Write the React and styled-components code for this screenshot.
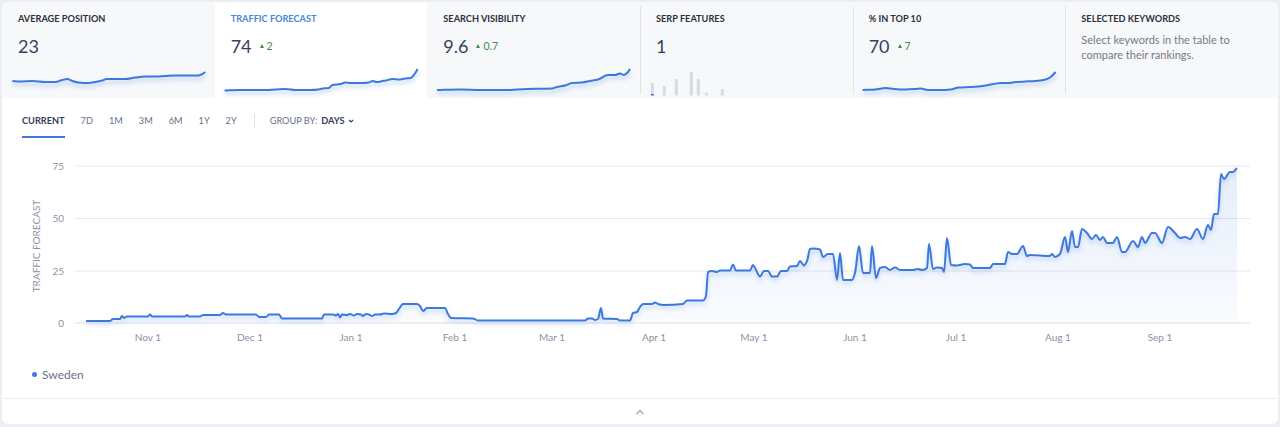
import React from "react";
import styled, { createGlobalStyle } from "styled-components";

const GlobalStyle = createGlobalStyle`
  html, body {
    margin: 0;
    padding: 0;
    background: #eceef3;
    font-family: "Lato", "Liberation Sans", sans-serif;
  }
`;

const BLUE = "#3d79db";

// chart points in page pixel coordinates
const CHART = [
  [86, 321], [110, 321], [113, 319], [120, 319], [122, 316], [124, 318], [127, 316.5], [148, 316.5],
  [150, 314.5], [152, 316.5], [185, 316.5], [187, 315], [189, 316.5], [200, 316.5], [203, 315], [220, 315],
  [223, 313], [226, 314.5], [256, 314.5], [259, 317], [266, 317], [269, 314.5], [279, 314.5], [282, 318.5],
  [322, 318.5], [324, 314.5], [333, 314.5], [336, 315.5], [338, 314], [340, 317.5], [342, 314.5], [347, 315],
  [350, 314], [354, 315.5], [357, 314], [361, 314.5], [363, 316], [366, 314], [369, 314.5], [372, 316],
  [375, 314.5], [380, 314.5], [384, 313.5], [392, 314], [396, 313], [399, 309], [403, 304], [417, 304],
  [420, 306], [423, 311], [427, 308], [445, 308], [448, 314], [451, 318], [473, 318.5], [478, 320.5],
  [585, 320.5], [588, 318.5], [592, 318.5], [595, 320], [598, 319], [601, 308], [603, 318.5], [617, 319],
  [620, 320.5], [630, 320.5], [633, 313], [637, 312], [640, 307], [643, 304], [652, 304], [655, 302.5],
  [658, 304], [663, 305], [683, 304], [687, 300.5], [703, 300.5], [706, 296], [708, 272], [712, 271],
  [717, 272], [720, 270.5], [730, 270.5], [733, 264.5], [736, 270.5], [750, 270.5], [753, 265], [756, 270],
  [760, 276.5], [764, 271], [768, 271], [772, 276.5], [777, 276.5], [781, 271], [787, 271], [790, 266.5],
  [797, 266], [800, 261], [804, 265.5], [807, 261], [810, 249], [813, 248.5], [820, 249.5], [823, 257],
  [828, 254], [833, 254], [837, 280], [840, 253], [843, 280], [852, 280], [855, 273], [859, 246],
  [863, 273], [870, 273], [872, 246], [876, 278], [880, 268], [885, 267], [890, 270], [895, 267.5],
  [900, 270], [913, 270], [918, 269], [922, 270], [927, 268], [929, 244], [933, 269], [937, 267.5],
  [942, 268], [944, 272], [947, 238], [951, 265], [957, 265.5], [965, 264], [970, 264.5], [973, 268],
  [990, 268], [993, 264], [1005, 264], [1008, 252], [1012, 254], [1017, 254], [1023, 246], [1027, 256],
  [1030, 255], [1050, 256], [1052, 254], [1055, 257], [1060, 254], [1065, 237], [1068, 252], [1072, 231],
  [1075, 247], [1078, 247], [1082, 229], [1087, 233], [1092, 239], [1096, 235], [1100, 240], [1103, 237],
  [1107, 243], [1113, 243], [1117, 237], [1122, 252], [1125, 252], [1133, 241], [1138, 247], [1142, 237],
  [1145, 243], [1152, 233], [1155, 233], [1162, 243], [1168, 227], [1175, 233], [1180, 238], [1185, 237],
  [1190, 239], [1197, 229], [1203, 239], [1208, 225], [1211, 230], [1214, 214], [1218, 214], [1221, 174],
  [1224, 179], [1230, 172], [1233, 172], [1237, 168],
];

const Y_TICKS = [
  { label: "75", y: 166 },
  { label: "50", y: 218.5 },
  { label: "25", y: 271 },
  { label: "0", y: 323 },
];

const X_TICKS = [
  ["Nov 1", 148], ["Dec 1", 250], ["Jan 1", 351], ["Feb 1", 455], ["Mar 1", 552],
  ["Apr 1", 654], ["May 1", 754], ["Jun 1", 855], ["Jul 1", 956], ["Aug 1", 1058], ["Sep 1", 1160],
];

const METRICS = [
  {
    title: "Average position",
    value: "23",
    left: 2,
    spark: [[12, 81], [20, 81.5], [32, 81], [45, 82], [55, 82], [62, 80], [67, 79], [72, 81], [78, 82.5],
      [88, 83], [95, 82], [102, 80.5], [106, 79], [125, 79], [135, 77.5], [145, 76.5], [155, 76.5],
      [165, 76], [175, 75.5], [185, 75.5], [198, 75.5], [202, 74], [205, 72]],
  },
  {
    title: "Traffic forecast",
    value: "74",
    delta: "2",
    active: true,
    left: 214.7,
    spark: [[224, 90.5], [240, 90], [260, 90], [275, 89.5], [285, 89], [295, 90], [310, 90], [318, 89.5],
      [322, 88.5], [328, 88], [332, 85], [340, 84], [345, 82.5], [350, 83], [355, 83], [362, 83],
      [368, 82.5], [372, 81], [376, 82], [382, 81], [385, 80.5], [392, 79], [398, 79.5], [402, 79],
      [405, 78.5], [410, 78], [414, 74], [417, 69]],
  },
  {
    title: "Search visibility",
    value: "9.6",
    delta: "0.7",
    left: 427.3,
    spark: [[437, 90], [460, 89.5], [480, 90], [505, 90], [527, 89], [552, 88.5], [557, 87], [565, 85.5],
      [572, 83], [582, 82.5], [590, 81], [598, 79.5], [608, 75], [615, 75], [620, 73.5], [624, 75],
      [628, 72], [630, 69]],
  },
  {
    title: "SERP features",
    value: "1",
    left: 640,
    bars: [[652, 83], [664, 86], [676, 79], [691, 72], [698, 79], [706, 92.5], [722, 89]],
  },
  {
    title: "% in top 10",
    value: "70",
    delta: "7",
    left: 852.7,
    spark: [[862, 90], [875, 89.5], [885, 88], [893, 89], [905, 89.5], [915, 89], [920, 88.5], [927, 90],
      [940, 90], [950, 89.5], [958, 87.5], [970, 87], [978, 86.5], [985, 85.5], [993, 84], [1000, 83],
      [1008, 83], [1015, 82], [1025, 81.5], [1035, 81], [1040, 80.5], [1045, 79.5], [1050, 77], [1055, 72]],
  },
  {
    title: "Selected keywords",
    text: "Select keywords in the table to compare their rankings.",
    left: 1065.3,
  },
];

const TABS = ["Current", "7D", "1M", "3M", "6M", "1Y", "2Y"];

// monotone-x cubic, same idea as d3.curveMonotoneX
function monotonePath(pts) {
  const n = pts.length;
  const dx = [];
  const m = [];
  for (let i = 0; i < n - 1; i++) {
    dx[i] = pts[i + 1][0] - pts[i][0];
    m[i] = (pts[i + 1][1] - pts[i][1]) / dx[i];
  }
  const t = [m[0]];
  for (let i = 1; i < n - 1; i++) {
    if (m[i - 1] * m[i] <= 0) {
      t[i] = 0;
    } else {
      const common = dx[i - 1] + dx[i];
      t[i] = (3 * common) / ((common + dx[i]) / m[i - 1] + (common + dx[i - 1]) / m[i]);
    }
  }
  t[n - 1] = m[n - 2];
  let d = `M${pts[0][0]},${pts[0][1]}`;
  for (let i = 0; i < n - 1; i++) {
    const [x0, y0] = pts[i];
    const [x1, y1] = pts[i + 1];
    const h = dx[i] / 3;
    d += `C${x0 + h},${y0 + t[i] * h},${x1 - h},${y1 - t[i + 1] * h},${x1},${y1}`;
  }
  return d;
}

const Page = styled.div`
  margin: 2px 2px 0;
  background: #fff;
  border-radius: 6px;
  overflow: hidden;
`;

const MetricsRow = styled.div`
  display: grid;
  grid-template-columns: repeat(6, 1fr);
  height: 96px;
`;

const Card = styled.div`
  position: relative;
  display: flex;
  flex-direction: column;
  padding: 10px 0 0 16px;
  background: ${(p) => (p.$active ? "#fff" : "#f7f8fa")};

  &::before {
    content: "";
    display: ${(p) => (p.$divider ? "block" : "none")};
    position: absolute;
    left: 0;
    top: 4px;
    bottom: 4px;
    width: 1px;
    background: #e2e4ea;
  }
`;

const CardTitle = styled.div`
  font-size: 9.2px;
  line-height: 13px;
  font-weight: 700;
  text-transform: uppercase;
  color: ${(p) => (p.$active ? "#4a86d8" : "#2c303b")};
`;

const ValueRow = styled.div`
  display: flex;
  align-items: center;
  gap: 8px;
  margin-top: 9px;
  height: 24px;
`;

const Value = styled.span`
  font-size: 18px;
  color: #383f5f;
`;

const Delta = styled.span`
  display: flex;
  align-items: center;
  gap: 3px;
  font-size: 10.5px;
  color: #3d8a52;

  &::before {
    content: "";
    border-left: 2.5px solid transparent;
    border-right: 2.5px solid transparent;
    border-bottom: 4px solid #3d8a52;
    margin-bottom: 1px;
  }
`;

const Note = styled.p`
  margin: 7px 12px 0 0;
  font-size: 11px;
  line-height: 15px;
  color: #747a88;
`;

const Spark = styled.svg`
  display: block;
  margin: 8px 0 0 -16px;
  width: calc(100% + 16px);
  height: 32px;
  overflow: visible;
`;

const Toolbar = styled.div`
  display: flex;
  align-items: flex-start;
  padding: 16px 0 0 20px;
`;

const Tab = styled.div`
  font-size: 9.2px;
  line-height: 14px;
  font-weight: ${(p) => (p.$active ? 700 : 400)};
  text-transform: uppercase;
  color: ${(p) => (p.$active ? "#363d5c" : "#677087")};
  padding: 0 0 8px;
  margin-right: 16px;
  border-bottom: 2px solid ${(p) => (p.$active ? BLUE : "transparent")};
`;

const Separator = styled.div`
  width: 1px;
  height: 14px;
  background: #e1e3e9;
  margin: 0 15px 0 1px;
`;

const GroupBy = styled.div`
  display: flex;
  align-items: center;
  gap: 4px;
  font-size: 9.2px;
  line-height: 14px;
  text-transform: uppercase;
  color: #677087;

  b {
    color: #363d5c;
    font-weight: 700;
  }
`;

const ChartSvg = styled.svg`
  display: block;
  margin-top: 12px;
  width: 100%;
  height: 200px;
`;

const AxisText = styled.text`
  font-family: "Lato", "Liberation Sans", sans-serif;
  font-size: 10px;
  fill: #8c92a4;
`;

const Legend = styled.div`
  height: 48px;
  display: flex;
  align-items: center;
  gap: 5px;
  padding-left: 30px;
  font-size: 12px;
  color: #6d7386;

  &::before {
    content: "";
    width: 5px;
    height: 5px;
    border-radius: 50%;
    background: ${BLUE};
  }
`;

const Footer = styled.div`
  height: 25px;
  border-top: 1px solid #eceef2;
  display: flex;
  align-items: center;
  justify-content: center;
`;

function Sparkline({ metric, index }) {
  const local = metric.spark.map(([x, y]) => [x - metric.left, y - 66]);
  const d = monotonePath(local);
  return (
    <Spark viewBox="0 0 212 32">
      <defs>
        <filter id={`ss${index}`} x="-10%" y="-50%" width="120%" height="250%">
          <feDropShadow dx="0" dy="3" stdDeviation="2" floodColor={BLUE} floodOpacity="0.4" />
        </filter>
      </defs>
      <path d={d} fill="none" stroke={BLUE} strokeWidth="2" strokeLinejoin="round" filter={`url(#ss${index})`} />
    </Spark>
  );
}

function Bars({ metric }) {
  return (
    <Spark viewBox="0 0 212 32">
      {metric.bars.map(([x, y], i) => (
        <rect key={i} x={x - metric.left - 1.5} y={y - 66} width="3" height={95.5 - y} fill="#d7dae4" />
      ))}
      <rect x={652 - metric.left - 1.5} y={28} width="3" height="1.5" fill={BLUE} />
    </Spark>
  );
}

function MetricCard({ metric, index, prevActive }) {
  const divider = index > 0 && !metric.active && !prevActive;
  return (
    <Card $active={metric.active} $divider={divider}>
      <CardTitle $active={metric.active}>{metric.title}</CardTitle>
      {metric.text ? (
        <Note>{metric.text}</Note>
      ) : (
        <ValueRow>
          <Value>{metric.value}</Value>
          {metric.delta ? <Delta>{metric.delta}</Delta> : null}
        </ValueRow>
      )}
      {metric.spark ? <Sparkline metric={metric} index={index} /> : null}
      {metric.bars ? <Bars metric={metric} /> : null}
    </Card>
  );
}

function TrafficChart() {
  const line = monotonePath(CHART);
  const first = CHART[0][0];
  const last = CHART[CHART.length - 1][0];
  const area = `${line}L${last},323L${first},323Z`;
  return (
    <ChartSvg viewBox="2 150 1276 200" preserveAspectRatio="none">
      <defs>
        <linearGradient id="areaFill" x1="0" y1="0" x2="0" y2="1">
          <stop offset="0%" stopColor={BLUE} stopOpacity="0.13" />
          <stop offset="100%" stopColor={BLUE} stopOpacity="0.03" />
        </linearGradient>
        <filter id="lineShadow" x="-5%" y="-20%" width="110%" height="140%">
          <feDropShadow dx="0" dy="3" stdDeviation="2" floodColor={BLUE} floodOpacity="0.3" />
        </filter>
      </defs>
      {Y_TICKS.map((t) => (
        <g key={t.label}>
          <line x1="75" x2="1250" y1={t.y} y2={t.y} stroke={t.label === "0" ? "#dde1ea" : "#e6e8ee"} />
          <AxisText x="64" y={t.y + 3.5} textAnchor="end">{t.label}</AxisText>
        </g>
      ))}
      <AxisText x="0" y="0" textAnchor="middle" transform="translate(40 246) rotate(-90)" fontSize="9.5" fill="#979db0">
        TRAFFIC FORECAST
      </AxisText>
      <path d={area} fill="url(#areaFill)" />
      <path d={line} fill="none" stroke={BLUE} strokeWidth="2" strokeLinejoin="round" filter="url(#lineShadow)" />
      {X_TICKS.map(([label, x]) => (
        <AxisText key={label} x={x} y="341" textAnchor="middle">{label}</AxisText>
      ))}
    </ChartSvg>
  );
}

export default function App() {
  return (
    <>
      <GlobalStyle />
      <Page>
        <MetricsRow>
          {METRICS.map((m, i) => (
            <MetricCard key={m.title} metric={m} index={i} prevActive={i > 0 && METRICS[i - 1].active} />
          ))}
        </MetricsRow>
        <Toolbar>
          {TABS.map((t, i) => (
            <Tab key={t} $active={i === 0}>{t}</Tab>
          ))}
          <Separator />
          <GroupBy>
            Group by: <b>Days</b>
            <svg width="6" height="4" viewBox="0 0 6 4">
              <path d="M1 1l2 2 2-2" fill="none" stroke="#363d5c" strokeWidth="1.1" />
            </svg>
          </GroupBy>
        </Toolbar>
        <TrafficChart />
        <Legend>Sweden</Legend>
        <Footer>
          <svg width="10" height="6" viewBox="0 0 10 6">
            <path d="M1.5 5L5 1.5 8.5 5" fill="none" stroke="#a3a8ba" strokeWidth="1.5" />
          </svg>
        </Footer>
      </Page>
    </>
  );
}
